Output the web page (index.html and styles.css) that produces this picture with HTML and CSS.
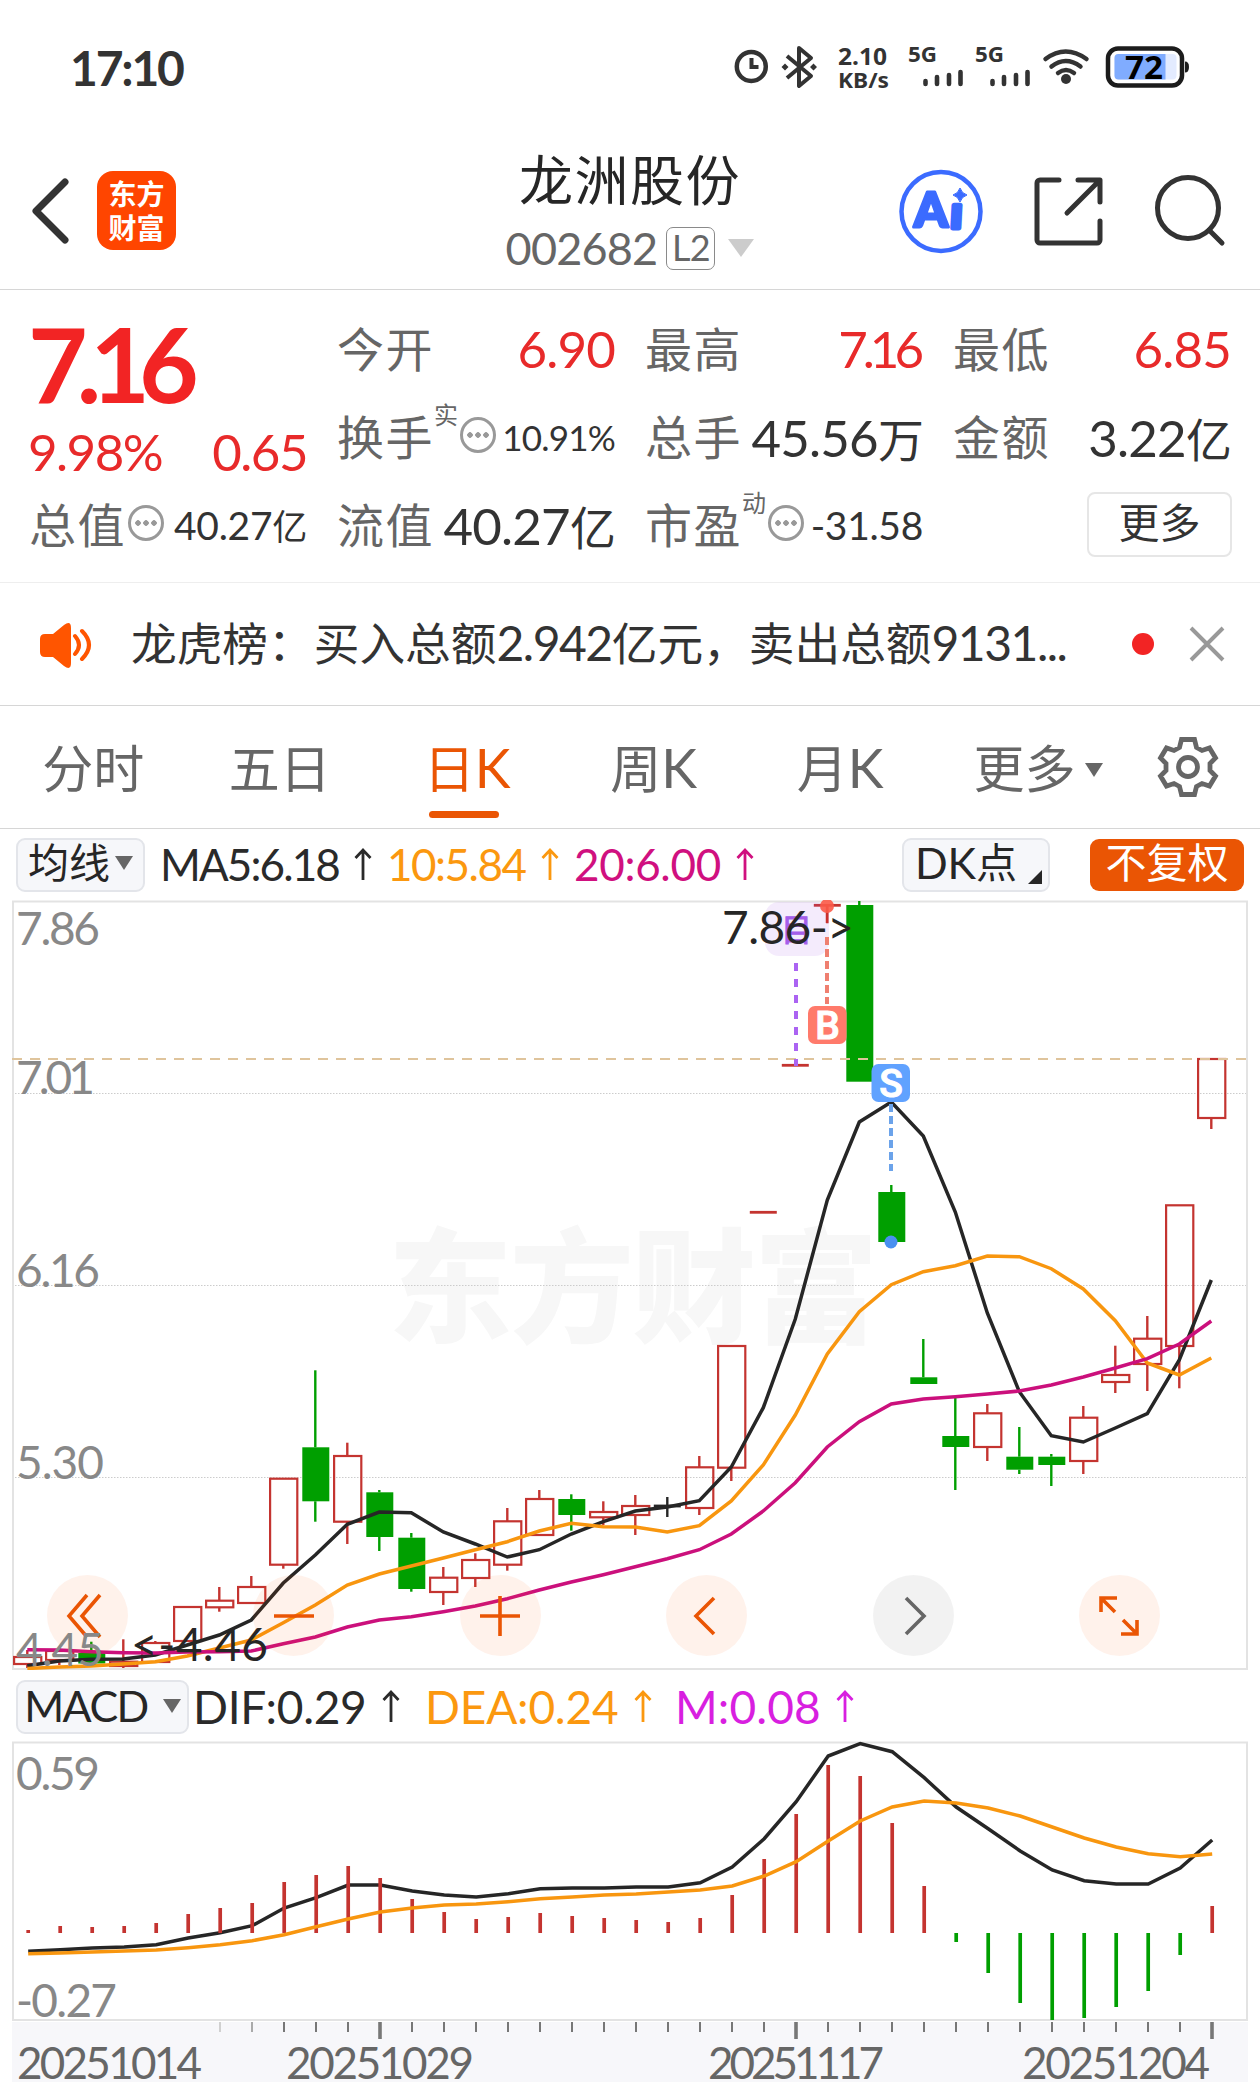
FILE: index.html
```html
<!DOCTYPE html>
<html lang="zh-CN">

<head>
    <meta charset="UTF-8">
    <meta name="viewport" content="width=device-width, initial-scale=1.0">
    <title>龙洲股份 002682</title>
    <link rel="stylesheet" href="styles.css">
</head>

<body>

    <!-- 状态栏 -->
    <div class="status">
        <span class="status-time">17:10</span>
        <svg class="status-icons" viewBox="730 30 464 74" width="464" height="74">
            <circle cx="751.3" cy="66.5" r="14.5" fill="none" stroke="#333" stroke-width="4.5" />
            <path d="M751.5 58v9h7" fill="none" stroke="#333" stroke-width="4" />
            <path d="M787 56l24 20-12 10V48l12 10-24 20" fill="none" stroke="#333" stroke-width="4" stroke-linejoin="round" />
            <path d="M785 63.500l3.500 3.500-3.500 3.500-3.500-3.500zM813.500 63.500l3.500 3.500-3.500 3.500-3.500-3.500z" fill="#333" />
            <g class="status-text">
                <text x="838" y="64.500" font-size="24" textLength="49" lengthAdjust="spacingAndGlyphs">2.10</text>
                <text x="838" y="88" font-size="22" textLength="51" lengthAdjust="spacingAndGlyphs">KB/s</text>
                <text x="908" y="62" font-size="22" textLength="29" lengthAdjust="spacingAndGlyphs">5G</text>
                <text x="975" y="62" font-size="22" textLength="29" lengthAdjust="spacingAndGlyphs">5G</text>
            </g>
            <path d="M925.500 81v3M937 77v7M949 75v9M960.500 72v12M992.500 81v3M1004 77v7M1016 75v9M1027.500 72v12" stroke="#333" stroke-width="4.600" stroke-linecap="round" />
            <g fill="none" stroke="#333" stroke-width="4.500" stroke-linecap="round">
                <path d="M1045.500 59q20-15 41 0" />
                <path d="M1051.500 66.500q14-11 29 0" />
                <path d="M1058 73q8-6 16 0" />
            </g>
            <circle cx="1066" cy="79" r="5" fill="#333" />
            <rect x="1108" y="48.500" width="74" height="37" rx="10" fill="#fff" stroke="#1c1c1c" stroke-width="4.500" />
            <rect x="1114.500" y="54" width="62" height="25.500" rx="4" fill="#e3ebff" />
            <path d="M1118.500 54h47v25.500h-47a4 4 0 0 1-4-4v-17.500a4 4 0 0 1 4-4z" fill="#80acff" />
            <path d="M1185 61.500q4 0 4 5.500t-4 5.500z" fill="#1c1c1c" />
            <text class="battery-num" x="1125" y="79" font-size="32" textLength="38" lengthAdjust="spacingAndGlyphs">72</text>
        </svg>
    </div>

    <!-- 标题栏 -->
    <div class="header">
        <svg class="back" viewBox="0 0 40 68" width="40" height="68">
            <path d="M35 5L6 34l29 29" fill="none" stroke="#333" stroke-width="7" stroke-linecap="round" stroke-linejoin="round" />
        </svg>
        <div class="logo"><span>东方</span><span>财富</span></div>
        <div class="title">
            <div class="name">龙洲股份</div>
            <div class="code"><span>002682</span><span class="level">L2</span><i class="caret caret-light"></i></div>
        </div>
        <svg class="actions" viewBox="898 165 330 90" width="330" height="90">
            <circle cx="941" cy="210.500" r="39.500" fill="none" stroke="#3b6bff" stroke-width="4.500" />
            <text class="ai" x="914" y="226" font-size="48" textLength="34" lengthAdjust="spacingAndGlyphs">A</text>
            <text class="ai ai-i" x="951" y="227" font-size="44" transform="skewX(-3) translate(11 0)">ı</text>
            <path d="M960 187q1.800 5.500 7 7-5.200 1.500-7 7-1.800-5.500-7-7 5.200-1.500 7-7z" fill="#3b6bff" stroke="#3b6bff" />
            <g fill="none" stroke="#333" stroke-width="5" stroke-linecap="round" stroke-linejoin="round">
                <path d="M1059 179h-19a3 3 0 0 0-3 3v57a3 3 0 0 0 3 3h57a3 3 0 0 0 3-3v-19" />
                <path d="M1078 179h22v22M1099 180l-32 32" />
                <circle cx="1188" cy="207" r="30.500" />
                <path d="M1209 229l13 13" />
            </g>
        </svg>
    </div>

    <!-- 报价 -->
    <div class="quote">
        <div class="main">
            <div class="price">7.16</div>
            <div class="change"><span>9.98%</span><span>0.65</span></div>
            <div class="cell"><label>总值</label><i class="more-dot"></i><b class="mid">40.27<u>亿</u></b></div>
        </div>
        <div class="grid">
            <div class="cell"><label>今开</label><b class="red">6.90</b></div>
            <div class="cell"><label>最高</label><b class="red tight">7.16</b></div>
            <div class="cell"><label>最低</label><b class="red">6.85</b></div>
            <div class="cell"><label>换手</label><sup>实</sup><i class="more-dot"></i><b class="small">10.91%</b></div>
            <div class="cell"><label>总手</label><b>45.56<u>万</u></b></div>
            <div class="cell"><label>金额</label><b>3.22<u>亿</u></b></div>
            <div class="cell"><label>流值</label><b>40.27<u>亿</u></b></div>
            <div class="cell"><label>市盈</label><sup>动</sup><i class="more-dot"></i><b class="mid">-31.58</b></div>
            <div class="cell cell-more"><span class="btn-more">更多</span></div>
        </div>
    </div>

    <!-- 龙虎榜公告 -->
    <div class="notice">
        <svg class="horn" viewBox="38 618 56 50" width="56" height="50">
            <path d="M45 633h8l11-9q7-5 7 3v35q0 8-7 3l-11-9h-8q-5 0-5-5v-13q0-5 5-5z" fill="#ff5500" />
            <path d="M75 635q8 9 0 18M82 630q14 14 0 28" fill="none" stroke="#ff5500" stroke-width="4" stroke-linecap="round" />
        </svg>
        <p class="notice-text">龙虎榜：买入总额<s>2.942</s>亿元，卖出总额<s>9131...</s></p>
        <i class="dot"></i>
        <svg class="close" viewBox="0 0 36 36" width="36" height="36">
            <path d="M2 2l32 32M34 2L2 34" stroke="#999" stroke-width="3.900" />
        </svg>
    </div>

    <!-- 周期切换 -->
    <div class="tabs">
        <span class="tab">分时</span>
        <span class="tab">五日</span>
        <span class="tab active">日<s>K</s></span>
        <span class="tab">周<s>K</s></span>
        <span class="tab">月<s>K</s></span>
        <span class="tab tab-more">更多<i class="caret caret-small"></i></span>
        <svg class="gear" viewBox="-32 -32 64 64" width="64" height="64">
            <path d="M-6.500-27.500H6.500L8.500-19.500 14-16.500 21.500-19 27.500-9 22-3.500V3.500L27.500 9 21.500 19 14 16.500 8.500 19.500 6.500 27.500H-6.500L-8.500 19.500-14 16.500-21.500 19-27.500 9-22 3.500V-3.500L-27.500-9-21.500-19-14-16.500-8.500-19.500z" fill="none" stroke="#666" stroke-width="4.800" />
            <circle r="9.500" fill="none" stroke="#666" stroke-width="4.800" />
        </svg>
    </div>

    <!-- 均线 -->
    <div class="ind ind-ma">
        <span class="chip">均线<i class="caret caret-small"></i></span>
        <span class="val val-ma5">MA5:6.18</span>
        <span class="val val-ma10">10:5.84</span>
        <span class="val val-ma20">20:6.00</span>
        <span class="chip chip-dk"><s>DK</s>点<i class="corner"></i></span>
        <span class="chip chip-fq">不复权</span>
    </div>

    <!-- K线图 -->
    <div class="kline">
        <svg id="kline" viewBox="12 900 1236 770" width="1236" height="770">
            <text class="watermark" x="388" y="1333" font-size="124" textLength="490">东方财富</text>
            <path class="grid-line" d="M12 1093.500H1248M12 1285.500H1248M12 1477.500H1248" />
            <rect class="frame" x="13" y="901.500" width="1234" height="767.500" />
            <g id="candles"></g>
            <path d="M12 1059H1248" stroke="#dfc49c" stroke-width="2" stroke-dasharray="10 8" />
            <g id="ma"></g>
        </svg>
        <div class="tools">
            <span class="tool"><svg viewBox="-20 -24 40 48"><path d="M-1-21L-19 0-1 21M12-21L-6 0 12 21" /></svg></span>
            <span class="tool"><svg viewBox="-20 -24 40 48"><path d="M-20 0H20" /></svg></span>
            <span class="tool"><svg viewBox="-20 -24 40 48"><path d="M-20 0H20M0-20V20" /></svg></span>
            <span class="tool"><svg viewBox="-20 -24 40 48"><path d="M7-18L-11 0 7 18" /></svg></span>
            <span class="tool tool-off"><svg viewBox="-20 -24 40 48"><path d="M-7-18L11 0-7 18" /></svg></span>
            <span class="tool"><svg viewBox="-20 -24 40 48"><path d="M-18-4V-18H-2M-18-18L-4-4M18 4V18H2M18 18L4 4" /></svg></span>
        </div>
        <svg class="marks" viewBox="12 900 1236 770" width="1236" height="770">
            <rect x="765" y="902" width="64" height="54" rx="14" fill="#a55eea" fill-opacity=".12" />
            <text x="781" y="941" font-size="31" fill="#a55eea" stroke="#a55eea">目</text>
            <path d="M796 963V1066" stroke="#ab63f2" stroke-width="4" stroke-dasharray="8 8" />
            <path d="M827 937V1004" stroke="#ef7f70" stroke-width="4" stroke-dasharray="8 4" />
            <path d="M827 905V923" stroke="#c9302c" stroke-width="2.500" />
            <circle cx="827" cy="906" r="7" fill="#fb5a48" fill-opacity=".9" />
            <rect x="808" y="1006" width="38.500" height="38" rx="7" fill="#ff7a6b" />
            <text class="mark" x="827.500" y="1039" font-size="39">B</text>
            <path d="M891 1104V1171" stroke="#6ba3ea" stroke-width="4" stroke-dasharray="8 4" />
            <rect x="871.500" y="1064" width="38.500" height="38" rx="7" fill="#60a2ff" />
            <text class="mark" x="891" y="1097" font-size="39">S</text>
            <circle cx="891" cy="1242" r="6.500" fill="#4a90f0" />
            <g class="axis-text">
                <text x="16" y="945" textLength="84">7.86</text>
                <text x="16" y="1094" textLength="79">7.01</text>
                <text x="16" y="1287" textLength="84">6.16</text>
                <text x="16" y="1479" textLength="88">5.30</text>
                <text x="16" y="1666" textLength="88">4.45</text>
            </g>
            <g class="peak-text">
                <text x="722" y="944" textLength="132">7.86-&gt;</text>
                <text x="131" y="1661" textLength="137">&lt;-4.46</text>
            </g>
        </svg>
    </div>

    <!-- MACD -->
    <div class="ind ind-macd">
        <span class="chip chip-macd"><s>MACD</s><i class="caret caret-small"></i></span>
        <span class="val val-dif">DIF:0.29</span>
        <span class="val val-dea">DEA:0.24</span>
        <span class="val val-m">M:0.08</span>
    </div>
    <svg class="macd" viewBox="12 1741 1236 341" width="1236" height="341">
        <rect x="12" y="2022" width="1236" height="60" fill="#f7f7fa" />
        <rect class="frame" x="13" y="1742.500" width="1234" height="277.500" />
        <g id="macd"></g>
        <g class="axis-text">
            <text x="16" y="1790" textLength="84">0.59</text>
            <text x="16" y="2017" textLength="101">-0.27</text>
        </g>
        <g class="date-text">
            <text x="17" y="2079" textLength="185">20251014</text>
            <text x="286" y="2079" textLength="188">20251029</text>
            <text x="708" y="2079" textLength="176">20251117</text>
            <text x="1022" y="2079" textLength="188">20251204</text>
        </g>
    </svg>

    <script src="script.js"></script>
</body>

</html>
```
FILE: styles.css
```css
body {
    margin: 0;
    width: 1260px;
    height: 2082px;
    overflow: hidden;
    background: #fff;
    color: #2a2a2a;
    font-family: Lato, "Noto Sans CJK SC", sans-serif;
}

i,
s,
u,
b {
    font-style: normal;
    font-weight: normal;
    text-decoration: none;
}

svg {
    display: block;
}

/* 状态栏 */
.status {
    display: flex;
    justify-content: space-between;
    align-items: center;
    box-sizing: border-box;
    height: 130px;
    padding: 4px 66px 0 70px;
}

.status-time {
    font-size: 48px;
    font-weight: bold;
    letter-spacing: -2.2px;
    color: #333;
}

.status-text {
    font-family: "Noto Sans", sans-serif;
    font-weight: bold;
    fill: #333;
}

.battery-num {
    font-family: "Noto Sans", sans-serif;
    font-weight: bold;
    fill: #000;
}

/* 标题栏 */
.header {
    display: grid;
    grid-template-columns: 40px 79px 1fr 330px;
    align-items: center;
    box-sizing: border-box;
    height: 160px;
    padding: 2px 32px 0 30px;
    border-bottom: 1.500px solid #d6d6d6;
}

.logo {
    display: flex;
    flex-direction: column;
    align-items: center;
    justify-content: center;
    width: 79px;
    height: 79px;
    margin-left: 27px;
    border-radius: 16px;
    background: #ff4500;
    color: #fff;
    font-size: 28px;
    font-weight: bold;
    line-height: 34px;
}

/* 左侧留白使标题相对整页居中 */
.title {
    margin-left: 213px;
    text-align: center;
    white-space: nowrap;
}

.name {
    padding-top: 7px;
    font-size: 54px;
    letter-spacing: 1.500px;
    line-height: 68px;
    color: #262626;
}

.code {
    display: flex;
    align-items: center;
    justify-content: center;
    height: 66px;
    font-size: 45px;
    letter-spacing: -.8px;
    color: #666;
}

.level {
    box-sizing: border-box;
    width: 49px;
    height: 43px;
    margin: 0 13px 0 9px;
    border: 1.500px solid #8a8a8a;
    border-radius: 7px;
    font-size: 36px;
    line-height: 39px;
}

.caret {
    display: inline-block;
    border: 13px solid transparent;
    border-top: 18px solid #ccc;
    border-bottom: 0;
}

.caret-small {
    border-width: 14px 9px 0;
    border-top-color: #666;
}

.ai {
    font-family: Lato, sans-serif;
    font-weight: 900;
    fill: #3b6bff;
    stroke: #3b6bff;
    stroke-width: 3;
    stroke-linejoin: round;
}

.ai-i {
    stroke-width: 5;
}

/* 报价 */
.quote {
    display: flex;
    box-sizing: border-box;
    height: 293px;
    padding: 17px 28px 0 30px;
    border-bottom: 1.500px solid #eee;
}

.main {
    width: 277px;
    margin-right: 31px;
}

.price {
    height: 112px;
    margin-left: -2px;
    font-size: 103px;
    font-weight: bold;
    line-height: 112px;
    letter-spacing: -11px;
    color: #f22424;
}

.change {
    display: flex;
    justify-content: space-between;
    height: 64px;
    margin-left: -2px;
    font-size: 51px;
    line-height: 65px;
    letter-spacing: -1.500px;
    color: #e82a2a;
}

.grid {
    display: grid;
    grid-template-columns: 277px 277px 277px;
    grid-auto-rows: 88px;
    column-gap: 31px;
}

.cell {
    display: flex;
    align-items: center;
    height: 88px;
    white-space: nowrap;
}

.cell label {
    margin-top: -9px;
    margin-left: -1px;
    font-size: 47px;
    letter-spacing: 1.500px;
    color: #666;
}

.cell sup {
    align-self: flex-start;
    margin-top: 4px;
    font-size: 24px;
    line-height: 32px;
    color: #666;
}

.cell b {
    margin-top: -5px;
    margin-left: auto;
    font-size: 51px;
    letter-spacing: -.8px;
    color: #333;
}

.cell b u {
    font-size: .9em;
}

.cell b.mid {
    font-size: 39px;
    letter-spacing: -.3px;
}

.cell b.small {
    font-size: 35px;
}

.cell b.red {
    color: #e82a2a;
}

.cell b.tight {
    letter-spacing: -5px;
    margin-right: 4px;
}

.more-dot {
    box-sizing: border-box;
    width: 36px;
    height: 36px;
    margin-left: 2px;
    margin-top: -8px;
    border: 3px solid #999;
    border-radius: 50%;
    background:
        radial-gradient(circle, #999 2.500px, transparent 3px) -8px 0 no-repeat,
        radial-gradient(circle, #999 2.500px, transparent 3px) 0 0 no-repeat,
        radial-gradient(circle, #999 2.500px, transparent 3px) 8px 0 no-repeat;
}

.cell-more {
    justify-content: flex-end;
}

.btn-more {
    box-sizing: border-box;
    width: 145px;
    height: 65px;
    margin-top: -5px;
    margin-right: -1px;
    border: 2px solid #e6e6e6;
    border-radius: 8px;
    font-size: 41px;
    line-height: 58px;
    text-align: center;
    color: #333;
}

/* 公告 */
.notice {
    display: flex;
    align-items: center;
    box-sizing: border-box;
    height: 123px;
    padding: 0 35px 0 38px;
    border-bottom: 1.500px solid #d6d6d6;
}

.notice-text {
    width: 1001px;
    margin: -6px 0 0;
    padding-left: 37px;
    box-sizing: content-box;
    font-size: 45.700px;
    white-space: nowrap;
    color: #333;
}

.notice-text s {
    font-size: 48px;
    letter-spacing: -1.500px;
}

.dot {
    width: 22px;
    height: 22px;
    border-radius: 50%;
    background: #f22424;
}

.close {
    margin-left: auto;
}

/* 周期 */
.tabs {
    display: grid;
    grid-template-columns: repeat(5, 186.500px) 211px 1fr;
    align-items: center;
    box-sizing: border-box;
    height: 123px;
    border-bottom: 1.500px solid #d6d6d6;
}

.tab {
    position: relative;
    font-size: 51px;
    line-height: 123px;
    text-align: center;
    color: #666;
}

.tab s {
    font-size: 54px;
    letter-spacing: -2px;
}

.tab.active {
    color: #ea5504;
}

.tab.active::after {
    content: "";
    position: absolute;
    left: 56px;
    bottom: 12px;
    width: 70px;
    height: 7px;
    border-radius: 4px;
    background: #ea5504;
}

.tab-more .caret {
    margin-left: 9px;
    vertical-align: 11px;
}

.gear {
    margin-left: 12px;
    margin-top: -3px;
}

/* 指标行 */
.ind {
    display: flex;
    align-items: center;
    box-sizing: border-box;
    padding: 0 16px;
    white-space: nowrap;
}

.ind-ma {
    height: 71px;
}

.ind-macd {
    height: 71px;
    padding-top: 3px;
}

.chip {
    display: flex;
    align-items: center;
    justify-content: center;
    box-sizing: border-box;
    width: 129px;
    height: 54px;
    gap: 5px;
    border: 2px solid #e3e5ea;
    border-radius: 9px;
    background: #f6f7fa;
    font-size: 41px;
    line-height: 46px;
    padding-bottom: 3px;
    color: #262626;
}

.chip s {
    font-size: 43px;
}

.chip-dk {
    position: relative;
    width: 148px;
    margin-left: auto;
    padding-right: 20px;
    gap: 0;
}

.corner {
    position: absolute;
    right: 6px;
    bottom: 6px;
    border-left: 14px solid transparent;
    border-bottom: 14px solid #262626;
}

.chip-fq {
    width: 154px;
    height: 52px;
    margin-left: 40px;
    border: 0;
    background: #ea5504;
    color: #fff;
}

.chip-macd {
    width: 173px;
    gap: 15px;
}

.chip-macd s {
    letter-spacing: -1.500px;
}

.val {
    display: flex;
    align-items: center;
    box-sizing: border-box;
    margin-top: -2px;
    font-size: 44px;
}

.val svg {
    margin-left: 15px;
}

.ind-macd .val {
    font-size: 46px;
}

.val-ma5 {
    width: 242px;
    padding-left: 15px;
    letter-spacing: -1.900px;
}

.val-ma10 {
    width: 187px;
    letter-spacing: -1.500px;
    color: #fb980f;
}

.val-ma20 {
    letter-spacing: -.3px;
    color: #d0107f;
}

.val-dif {
    width: 236px;
    padding-left: 4px;
    letter-spacing: -.3px;
}

.val-dea {
    width: 250px;
    letter-spacing: -.2px;
    color: #fb980f;
}

.val-m {
    letter-spacing: .1px;
    color: #d81fe0;
}

/* 图表 */
.kline {
    position: relative;
    width: 1236px;
    height: 770px;
    margin-left: 12px;
}

.marks {
    position: absolute;
    top: 0;
    left: 0;
}

.tools {
    position: absolute;
    left: 35px;
    right: 88px;
    bottom: 14px;
    display: flex;
    justify-content: space-between;
}

.tool {
    display: flex;
    align-items: center;
    justify-content: center;
    width: 81px;
    height: 81px;
    border-radius: 50%;
    background: rgba(255, 85, 0, .08);
}

.tool svg {
    width: 40px;
    height: 48px;
    overflow: visible;
    fill: none;
    stroke: #ea5504;
    stroke-width: 3.600;
}

.tool-off {
    background: rgba(0, 0, 0, .05);
}

.tool-off svg {
    stroke: #666;
}

.macd {
    margin-left: 12px;
}

.frame {
    fill: none;
    stroke: #e3e3e3;
    stroke-width: 2;
}

.grid-line {
    stroke: #ccc;
    stroke-width: 1;
    stroke-dasharray: 1.500 1.500;
}

.watermark {
    font-weight: 900;
    fill: #f7f7f7;
}

.axis-text {
    font-size: 46px;
    fill: #888;
}

.date-text {
    font-size: 44px;
    fill: #666;
}

.peak-text {
    font-size: 46px;
    fill: #262626;
}

.mark {
    font-family: Roboto, sans-serif;
    font-weight: 500;
    text-anchor: middle;
    fill: #fff;
    stroke: #fff;
}
```
FILE: script.js
```js
var NS = "http://www.w3.org/2000/svg"
var RED = "#c43430", GREEN = "#009f00", BLACK = "#262626", ORANGE = "#f8960f", PINK = "#cb107c"

// [实体上沿, 实体下沿, 最高, 最低, 颜色]
var candles = [
    [1657, 1664, 1650, 1668, RED], [1651, 1660, 1648, 1665, RED], [1653, 1663.5, 1641.7, 1664, GREEN],
    [1661.7, 1666, 1639.3, 1668, RED], [1643, 1662, 1641, 1662, RED], [1607, 1641, 1607, 1641, RED],
    [1600.7, 1607.3, 1587, 1611.7, RED], [1587, 1603, 1576, 1603, RED], [1478.7, 1564.7, 1478.7, 1568.7, RED],
    [1447.3, 1501.3, 1370.3, 1521.7, GREEN], [1456, 1521.7, 1442.7, 1544, RED], [1492.3, 1537, 1490, 1551, GREEN],
    [1537.7, 1589, 1533, 1591.7, GREEN], [1577.7, 1592, 1567, 1605, RED], [1560, 1578, 1553.3, 1587, RED],
    [1521.3, 1564.7, 1508, 1570.7, RED], [1499, 1535, 1490, 1535, RED], [1499, 1515, 1494.3, 1530.7, GREEN],
    [1512, 1517.3, 1501.3, 1525, RED], [1506, 1515, 1495, 1535, RED], [1506, 1506, 1497, 1517, BLACK],
    [1467.3, 1508, 1456, 1515, RED], [1346, 1467.7, 1346, 1481, RED], [1212.3, 1212.3, 1212.3, 1212.3, RED],
    [1065.3, 1065.3, 1065.3, 1065.3, RED], [905.3, 905.3, 905.3, 923.3, RED], [905, 1081.7, 901, 1081.7, GREEN],
    [1192, 1242, 1185, 1242, GREEN], [1377.3, 1384, 1339, 1384, GREEN], [1436, 1447, 1398, 1490, GREEN],
    [1413.3, 1447, 1404, 1461, RED], [1456.7, 1469.7, 1427, 1474, GREEN], [1456.7, 1465, 1454, 1486, GREEN],
    [1417.7, 1461, 1406, 1474, RED], [1375, 1382, 1345.7, 1393, RED], [1338.7, 1364, 1316, 1391, RED],
    [1205.3, 1346, 1205.3, 1388.3, RED], [1059, 1118, 1059, 1129, RED]
]

var ma5 = [1665.7, 1661, 1659.3, 1659, 1655, 1645, 1635, 1620, 1583, 1555, 1524.3, 1512, 1512.7, 1532, 1544, 1557, 1549.7, 1534, 1521.7, 1511, 1507, 1500.7, 1467, 1407.7, 1319, 1200, 1122, 1102, 1136, 1212, 1313, 1391.7, 1435.7, 1442, 1428, 1413.7, 1360, 1280]
var ma10 = [1668.5, 1667, 1666, 1664, 1661.7, 1656, 1648, 1640, 1622.7, 1605, 1585, 1574, 1566, 1558, 1549.7, 1541.7, 1531, 1523.3, 1526.7, 1527, 1532, 1525.7, 1501, 1465, 1415, 1354, 1311.7, 1284.7, 1271.7, 1265.7, 1256, 1256.7, 1268.7, 1289, 1320.7, 1363, 1375, 1358]
var ma20 = [1649.7, 1650, 1651.7, 1652.7, 1653, 1652, 1651.7, 1651, 1643.7, 1637, 1627, 1620, 1616.7, 1611.7, 1606, 1598.7, 1590, 1582, 1574.7, 1566.7, 1558.7, 1549.7, 1534, 1511, 1482.7, 1447, 1421.7, 1404, 1399, 1396.7, 1394, 1391, 1385, 1377, 1368, 1358.7, 1344, 1321]

var bars = [1930, 1926, 1927, 1926, 1923, 1914, 1908, 1903, 1882, 1875, 1866, 1878, 1899, 1912, 1919, 1917, 1913, 1916, 1918, 1920, 1922, 1918, 1895, 1859, 1814, 1765, 1776, 1823, 1886, 1942, 1973, 2003, 2020, 2018, 2007, 1991, 1955, 1906]
var dif = [1951.3, 1949.7, 1948, 1947, 1944.7, 1938, 1932.7, 1925.7, 1908, 1897.7, 1885, 1885, 1891, 1895, 1897, 1893.7, 1888.7, 1888, 1888, 1887, 1887, 1882.7, 1867, 1838.7, 1801.7, 1756, 1743.5, 1751.7, 1777.7, 1807, 1828.7, 1851, 1870, 1880.7, 1884, 1884, 1868, 1840]
var dea = [1953.7, 1953, 1952, 1951, 1950, 1947.7, 1944.7, 1940.7, 1934.7, 1926.7, 1919, 1912, 1908, 1905, 1904, 1901.7, 1898.7, 1897, 1895, 1894, 1892, 1890, 1886, 1876, 1861.7, 1841, 1821, 1807, 1801, 1803, 1808, 1816, 1827, 1838, 1847, 1853.7, 1856.7, 1854]

function add(parent, tag, attrs) {
    var el = document.createElementNS(NS, tag)
    for (var k in attrs) {
        el.setAttribute(k, attrs[k])
    }
    parent.appendChild(el)
    return el
}

function vline(parent, x, y1, y2, color, width) {
    add(parent, "path", { d: "M" + x + " " + y1 + "V" + y2, stroke: color, "stroke-width": width })
}

function curve(parent, x0, ys, color) {
    var points = ys.map(function (y, i) {
        return (x0 + 32 * i) + "," + y
    })
    add(parent, "polyline", { points: points.join(" "), fill: "none", stroke: color, "stroke-width": 3.5 })
}

// K线
var candleBox = document.getElementById("candles")
candles.forEach(function (c, i) {
    var x = 27.3 + 32 * i
    var top = c[0], bottom = c[1], color = c[4]
    if (c[2] < top) vline(candleBox, x, c[2], top, color, 2.4)
    if (c[3] > bottom) vline(candleBox, x, bottom, c[3], color, 2.4)
    if (top === bottom) {
        add(candleBox, "path", { d: "M" + (x - 13.5) + " " + top + "h27", stroke: color, "stroke-width": 2.8 })
    } else if (color === GREEN) {
        add(candleBox, "rect", { x: x - 13, y: top, width: 27, height: bottom - top, fill: color })
    } else {
        add(candleBox, "rect", { x: x - 13.2, y: top, width: 27.2, height: bottom - top, fill: "none", stroke: color, "stroke-width": 2.2 })
    }
})

// 均线
var maBox = document.getElementById("ma")
curve(maBox, 27.3, ma5, BLACK)
curve(maBox, 27.3, ma10, ORANGE)
curve(maBox, 27.3, ma20, PINK)

// MACD
var macdBox = document.getElementById("macd")
curve(macdBox, 28.2, dif, BLACK)
bars.forEach(function (y, i) {
    vline(macdBox, 28.2 + 32 * i, 1933, y, y < 1933 ? RED : GREEN, 3.7)
})
curve(macdBox, 28.2, dea, ORANGE)

// 日期刻度
for (var i = 6; i < 38; i++) {
    var major = i === 11 || i === 24 || i === 37
    vline(macdBox, 28 + 32 * i, 2022, major ? 2039 : 2032, i === 6 ? "#d0d0d0" : i === 7 ? "#aaa" : "#777", major ? 3.6 : 2)
}

// 指标后面的上升箭头
document.querySelectorAll(".val").forEach(function (val) {
    var svg = add(val, "svg", { viewBox: "0 0 18 34", width: 18, height: 34 })
    add(svg, "path", { d: "M9 33V3M1.500 11L9 3l7.500 8", fill: "none", stroke: "currentColor", "stroke-width": 2.8 })
})
```
